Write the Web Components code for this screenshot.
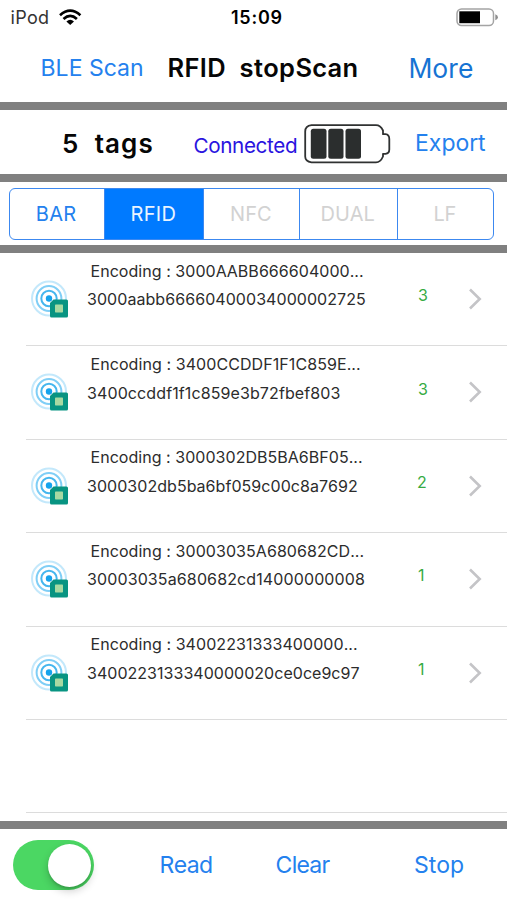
<!DOCTYPE html>
<html lang="en">
<head>
<meta charset="utf-8">
<title>RFID</title>
<style>
html, body {
  margin: 0;
  background: #fff;
}
body {
  width: 507px;
  height: 900px;
  overflow: hidden;
  font-family: Inter, "Liberation Sans", sans-serif;
}
</style>
</head>
<body>
<rfid-app></rfid-app>
<script>
// A single line of text, tracked so that its glyphs span exactly `width` pixels.
class FitLabel extends HTMLElement {
    connectedCallback() {
        const width = +this.getAttribute("width")
        const root = this.attachShadow({ mode: "open" })
        root.innerHTML = `
<style>
:host {
  display: block;
  flex: none;
  width: ${width}px;
  line-height: 1.2;
}
span { display: block; width: max-content; white-space: pre; font-kerning: none; }
</style>
<span><slot></slot></span>`
        const style = getComputedStyle(this)
        const ctx = document.createElement("canvas").getContext("2d")
        ctx.font = `${style.fontWeight} ${style.fontSize} ${style.fontFamily}`
        ctx.fontKerning = "none"
        const text = this.textContent
        const m = ctx.measureText(text)
        const ink = m.actualBoundingBoxLeft + m.actualBoundingBoxRight
        const span = root.querySelector("span")
        span.style.marginLeft = `${m.actualBoundingBoxLeft}px`
        if(text.length > 1) {
            span.style.letterSpacing = `${(width - ink) / (text.length - 1)}px`
        }
    }
}

// A horizontal band with an optional thick rule under it
class BarRow extends HTMLElement {
    connectedCallback() {
        const rule = this.hasAttribute("rule")
        this.attachShadow({ mode: "open" }).innerHTML = `
<style>
:host {
  display: flex;
  align-items: center;
  box-sizing: border-box;
  flex: none;
  width: 100%;
  border-bottom: ${rule ? "8px solid #808080" : "0"};
}
</style>
<slot></slot>`
    }
}

class SegmentedControl extends HTMLElement {
    connectedCallback() {
        // label, cell width, glyph width, state
        const segments = [
            ["BAR", 94, 39.5, ""],
            ["RFID", 99, 44, "on"],
            ["NFC", 96, 40, "off"],
            ["DUAL", 98, 53, "off"],
            ["LF", 96, 21, "off"]
        ]
        this.attachShadow({ mode: "open" }).innerHTML = `
<style>
:host {
  display: flex;
  box-sizing: border-box;
  width: 485px;
  height: 52px;
  border: 1.5px solid #3c88f0;
  border-radius: 6px;
  overflow: hidden;
  font-size: 20px;
  color: #2481ee;
}
div {
  box-sizing: border-box;
  flex: none;
  display: flex;
  align-items: center;
  justify-content: center;
  padding-right: 1px;
}
div + div { border-left: 1.5px solid #3c88f0; }
.on { background: #007aff; color: #e9f4ff; }
.off { color: #d2d2d2; }
</style>
${segments.map(([text, cell, width, state]) =>
    `<div class="${state}" style="width:${cell}px"><fit-label width="${width}">${text}</fit-label></div>`).join("")}`
    }
}

class TagIcon extends HTMLElement {
    connectedCallback() {
        this.attachShadow({ mode: "open" }).innerHTML = `
<style>
:host { display: block; flex: none; width: 38px; height: 38px; }
svg { display: block; }
</style>
<svg width="38" height="38" viewBox="0 0 38 38" fill="none">
  <circle cx="18" cy="18.5" r="17" stroke="#c3e8fb" stroke-width="2"/>
  <circle cx="18" cy="18.5" r="12.4" stroke="#7fcef6" stroke-width="2"/>
  <circle cx="18" cy="18.5" r="7.7" stroke="#45b6ee" stroke-width="2"/>
  <circle cx="18" cy="18.5" r="3.2" fill="#16a3ec"/>
  <path d="M22.5 19.5H35.5Q37 19.5 37 21V36Q37 37.5 35.5 37.5H20.5Q19 37.5 19 36V23Z" fill="#089482"/>
  <rect x="24" y="24.5" width="8" height="8" rx=".7" fill="#a8d9a2"/>
</svg>`
    }
}

class TagRow extends HTMLElement {
    connectedCallback() {
        const get = name => this.getAttribute(name)
        this.attachShadow({ mode: "open" }).innerHTML = `
<style>
:host {
  display: flex;
  box-sizing: border-box;
  height: 93.4px;
  margin-left: 26px;
  border-bottom: 1px solid #dcdcdc;
  font-size: 16px;
  color: #2c2c2c;
}
tag-icon { margin: 27px 0 0 5px; }
.lines { width: 331px; margin-left: 18px; }
.title { margin: 8.7px 0 0 4.5px; }
.epc { margin-top: 9.3px; }
.count { color: #36ab43; margin-top: 33.2px; }
.count-cell { width: 51px; }
svg { flex: none; margin-top: 35px; }
</style>
${get("epc") ? `
<tag-icon></tag-icon>
<div class="lines">
  <fit-label class="title" width="${get("title-width")}">Encoding : ${get("encoding")}...</fit-label>
  <fit-label class="epc" width="${get("epc-width")}">${get("epc")}</fit-label>
</div>
<div class="count-cell"><fit-label class="count" width="9">${get("count")}</fit-label></div>
<svg width="13" height="22" viewBox="0 0 13 22" fill="none" stroke="#c4c4c7" stroke-width="2.6">
  <path d="M1 1.5L10.7 11L1 20.5"/>
</svg>` : ""}`
    }
}

class ToggleSwitch extends HTMLElement {
    connectedCallback() {
        this.attachShadow({ mode: "open" }).innerHTML = `
<style>
:host {
  display: flex;
  justify-content: flex-end;
  align-items: center;
  box-sizing: border-box;
  flex: none;
  width: 81px;
  height: 50px;
  padding-right: 3px;
  border-radius: 25px;
  background: #4bd763;
}
i {
  width: 43px;
  height: 43px;
  border-radius: 50%;
  background: #fff;
  box-shadow: 0 4px 8px rgba(0, 0, 0, .2), 0 2px 2px rgba(0, 0, 0, .12);
}
</style>
<i></i>`
    }
}

class RfidApp extends HTMLElement {
    connectedCallback() {
        // encoding, drawn width, epc, drawn width, count
        const tags = [
            ["3000AABB666604000", 271.5, "3000aabb66660400034000002725", 278, 3],
            ["3400CCDDF1F1C859E", 268.5, "3400ccddf1f1c859e3b72fbef803", 252.5, 3],
            ["3000302DB5BA6BF05", 270.5, "3000302db5ba6bf059c00c8a7692", 270, 2],
            ["30003035A680682CD", 272, "30003035a680682cd14000000008", 277, 1],
            ["34002231333400000", 265.5, "3400223133340000020ce0ce9c97", 272.5, 1]
        ]
        this.attachShadow({ mode: "open" }).innerHTML = `
<style>
:host {
  display: flex;
  flex-direction: column;
  width: 507px;
  height: 900px;
  color: #2481ee;
  font-size: 23px;
}
svg { flex: none; display: block; }
.status { height: 34px; padding-top: 1px; color: #000; font-size: 18px; }
.nav { height: 76px; padding-top: 1px; }
.info { height: 72px; padding-top: 3px; }
.modes { height: 71px; padding-left: 9px; }
.list { height: 576px; flex: none; box-sizing: border-box; overflow: hidden; border-bottom: 8px solid #808080; }
.foot { height: 71px; padding: 1px 0 0 13px; }
.foot fit-label { margin-top: 2px; }
.strong { color: #060606; font-weight: 600; }
</style>
<bar-row class="status">
  <fit-label width="36.5" style="margin-left:11.5px;color:#333">iPod</fit-label>
  <svg width="23" height="17" viewBox="0 0 23 17" style="margin:-1px 0 0 11px" fill="none" stroke="#000" stroke-width="2.7">
    <path d="M1 6.2Q11.2 -2.9 21.4 6.2"/>
    <path d="M4.5 9.9Q11.2 3.8 17.9 9.9"/>
    <path d="M11.2 16.1L7.4 12.5Q11.2 9.2 15 12.5Z" fill="#000" stroke="none"/>
  </svg>
  <fit-label width="50.5" style="margin-left:149px;font-weight:600">15:09</fit-label>
  <svg width="43" height="19" viewBox="0 0 43 19" style="margin-left:174px">
    <rect x="1" y="1" width="36.5" height="16.5" rx="4.5" fill="#fff" stroke="#a4a4a4" stroke-width="1.5"/>
    <path d="M3.3 3.3H24V15.2H3.3Z" fill="#000"/>
    <path d="M39.3 6.2Q42 7 42 9.2T39.3 12.3Z" fill="#8e8e8e"/>
  </svg>
</bar-row>
<bar-row class="nav" rule>
  <fit-label width="99.5" style="margin-left:42.5px">BLE Scan</fit-label>
  <fit-label class="strong" width="188" style="margin-left:26.5px;font-size:25.5px">RFID  stopScan</fit-label>
  <fit-label width="62.5" style="margin-left:54px;font-size:26.5px;color:#1673d3">More</fit-label>
</bar-row>
<bar-row class="info" rule>
  <fit-label class="strong" width="89.5" style="margin-left:63px;font-size:26px">5  tags</fit-label>
  <fit-label width="102.5" style="margin:6px 0 0 42px;font-size:20.7px;color:#2a14df">Connected</fit-label>
  <svg width="88" height="40" viewBox="0 0 88 40" style="margin:0 0 0 7px" fill="#2b2e2e">
    <path d="M7.5 1.2H72Q76.5 1.2 79 6.5V10.2H81.5Q85.3 10.6 85.3 15V25.5Q85.3 29.4 81.5 29.8H79V32.5Q76.5 38.3 72 38.3H7.5Q1.2 37.5 1.2 32.5V7.5Q1.2 2 7.5 1.2Z" fill="#fff" stroke="#303232" stroke-width="1.8" stroke-linejoin="round"/>
    <rect x="6.8" y="4.7" width="15.7" height="30" rx="2.5"/>
    <rect x="24.3" y="4.7" width="15.2" height="30" rx="2.5"/>
    <rect x="41.5" y="4.7" width="15.5" height="30" rx="2.5"/>
  </svg>
  <fit-label width="69" style="margin:1px 0 0 25px">Export</fit-label>
</bar-row>
<bar-row class="modes" rule><segmented-control></segmented-control></bar-row>
<div class="list">
${tags.map(([encoding, titleWidth, epc, epcWidth, count]) =>
    `<tag-row encoding="${encoding}" title-width="${titleWidth}" epc="${epc}" epc-width="${epcWidth}" count="${count}"></tag-row>`).join("")}
  <tag-row></tag-row>
</div>
<bar-row class="foot">
  <toggle-switch></toggle-switch>
  <fit-label width="50.5" style="margin-left:67.5px">Read</fit-label>
  <fit-label width="54" style="margin-left:64.5px">Clear</fit-label>
  <fit-label width="48" style="margin-left:84.5px">Stop</fit-label>
</bar-row>`
    }
}

customElements.define("fit-label", FitLabel)
customElements.define("bar-row", BarRow)
customElements.define("segmented-control", SegmentedControl)
customElements.define("tag-icon", TagIcon)
customElements.define("tag-row", TagRow)
customElements.define("toggle-switch", ToggleSwitch)
customElements.define("rfid-app", RfidApp)
</script>
</body>
</html>
